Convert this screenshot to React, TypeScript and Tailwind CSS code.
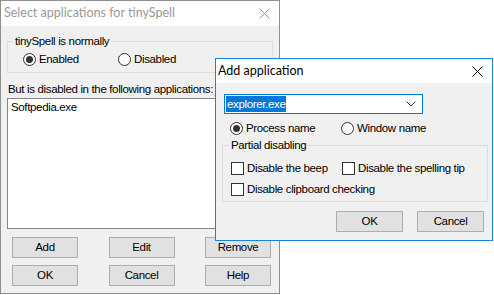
import type { ReactNode } from "react";

const body = { fontFamily: '"Microsoft Sans Serif", "Liberation Sans", Arial, sans-serif' };
const title = { fontFamily: '"Segoe UI", Lato, "Liberation Sans", sans-serif' };

function Radio({ checked, label, width }: { checked?: boolean; label: string; width: string }) {
  return (
    <div className={`flex items-center h-[16px] ${width}`}>
      <span className="w-[13px] h-[13px] rounded-full border border-[#333] bg-white flex items-center justify-center shrink-0">
        {checked && <span className="w-[7px] h-[7px] rounded-full bg-[#333]" />}
      </span>
      <span className="ml-[3px] leading-[16px]">{label}</span>
    </div>
  );
}

function Check({ label, width = "" }: { label: string; width?: string }) {
  return (
    <div className={`flex items-center h-[16px] ${width}`}>
      <span className="w-[13px] h-[13px] border border-[#333] bg-white shrink-0" />
      <span className="ml-[3px] leading-[16px]">{label}</span>
    </div>
  );
}

function Button({ children, w = "w-[66px]" }: { children: ReactNode; w?: string }) {
  return (
    <button className={`${w} h-[21px] bg-[#e1e1e1] border border-[#adadad] text-black leading-[19px] text-center`}>
      {children}
    </button>
  );
}

function CloseX({ color }: { color: string }) {
  return (
    <svg width="11" height="11" viewBox="0 0 11 11">
      <path d="M0.5 0.5 L10.5 10.5 M10.5 0.5 L0.5 10.5" stroke={color} strokeWidth="1" fill="none" />
    </svg>
  );
}

export default function App() {
  return (
    <div className="relative w-[494px] h-[295px] bg-white text-[11.5px] tracking-[-0.35px] text-black overflow-hidden" style={body}>
      {/* main window */}
      <div className="absolute left-0 top-0 w-[280px] h-[294px] border border-[#8f8f8f] bg-[#f0f0f0] flex flex-col">
        <div className="h-[25px] bg-white flex items-center justify-between pl-[3px] pr-[9px] text-[#999] text-[12.5px] tracking-normal" style={title}>
          <span>Select applications for tinySpell</span>
          <CloseX color="#999" />
        </div>
        <div className="flex flex-col pl-[6px] pr-[6px]">
          <fieldset className="mt-[7px] border border-[#dcdcdc] pl-[5px] pb-[5px]">
            <legend className="px-[2px] leading-[16px]">tinySpell is normally</legend>
            <div className="flex pl-[10px] pt-[2px]">
              <Radio checked label="Enabled" width="w-[95px]" />
              <Radio label="Disabled" width="w-[100px]" />
            </div>
          </fieldset>
          <div className="mt-[8px] h-[16px] leading-[16px] pl-[1px]">But is disabled in the following applications:</div>
          <div className="mt-[1px] h-[131px] border border-[#828790] bg-white pl-[3px] leading-[16px]">Softpedia.exe</div>
          <div className="mt-[8px] flex justify-between pl-[5px] pr-[2px]">
            <Button>Add</Button>
            <Button>Edit</Button>
            <Button>Remove</Button>
          </div>
          <div className="mt-[7px] flex justify-between pl-[5px] pr-[2px]">
            <Button>OK</Button>
            <Button>Cancel</Button>
            <Button>Help</Button>
          </div>
        </div>
      </div>

      {/* add application dialog */}
      <div className="absolute left-[215px] top-[58px] w-[278px] h-[183px] border border-[#1883d7] bg-[#f0f0f0] flex flex-col">
        <div className="h-[24px] bg-white flex items-center justify-between pl-[2px] pr-[9px]">
          <span className="text-[12.5px] tracking-normal" style={title}>Add application</span>
          <CloseX color="#000" />
        </div>
        <div className="flex flex-col">
          <div className="mt-[11px] ml-[8px] w-[199px] h-[20px] border border-[#0078d7] bg-white flex items-center pl-[1px] pr-[6px]">
            <span className="bg-[#0078d7] text-white leading-[16px] px-[1px]">explorer.exe</span>
            <svg className="ml-auto" width="10" height="6" viewBox="0 0 10 6">
              <path d="M0.5 0.5 L5 5 L9.5 0.5" stroke="#333" strokeWidth="1" fill="none" />
            </svg>
          </div>
          <div className="mt-[6px] flex pl-[14px]">
            <Radio checked label="Process name" width="w-[111px]" />
            <Radio label="Window name" width="w-[110px]" />
          </div>
          <fieldset className="mt-[1px] ml-[6px] w-[266px] border border-[#dcdcdc] pl-[6px] pb-[4px]">
            <legend className="px-[2px] leading-[16px]">Partial disabling</legend>
            <div className="flex flex-col gap-[5px] pt-[7px] pl-[2px]">
              <div className="flex">
                <Check label="Disable the beep" width="w-[111px]" />
                <Check label="Disable the spelling tip" />
              </div>
              <Check label="Disable clipboard checking" />
            </div>
          </fieldset>
          <div className="mt-[9px] flex justify-end gap-[14px] pr-[8px]">
            <Button w="w-[67px]">OK</Button>
            <Button w="w-[67px]">Cancel</Button>
          </div>
        </div>
      </div>
    </div>
  );
}
